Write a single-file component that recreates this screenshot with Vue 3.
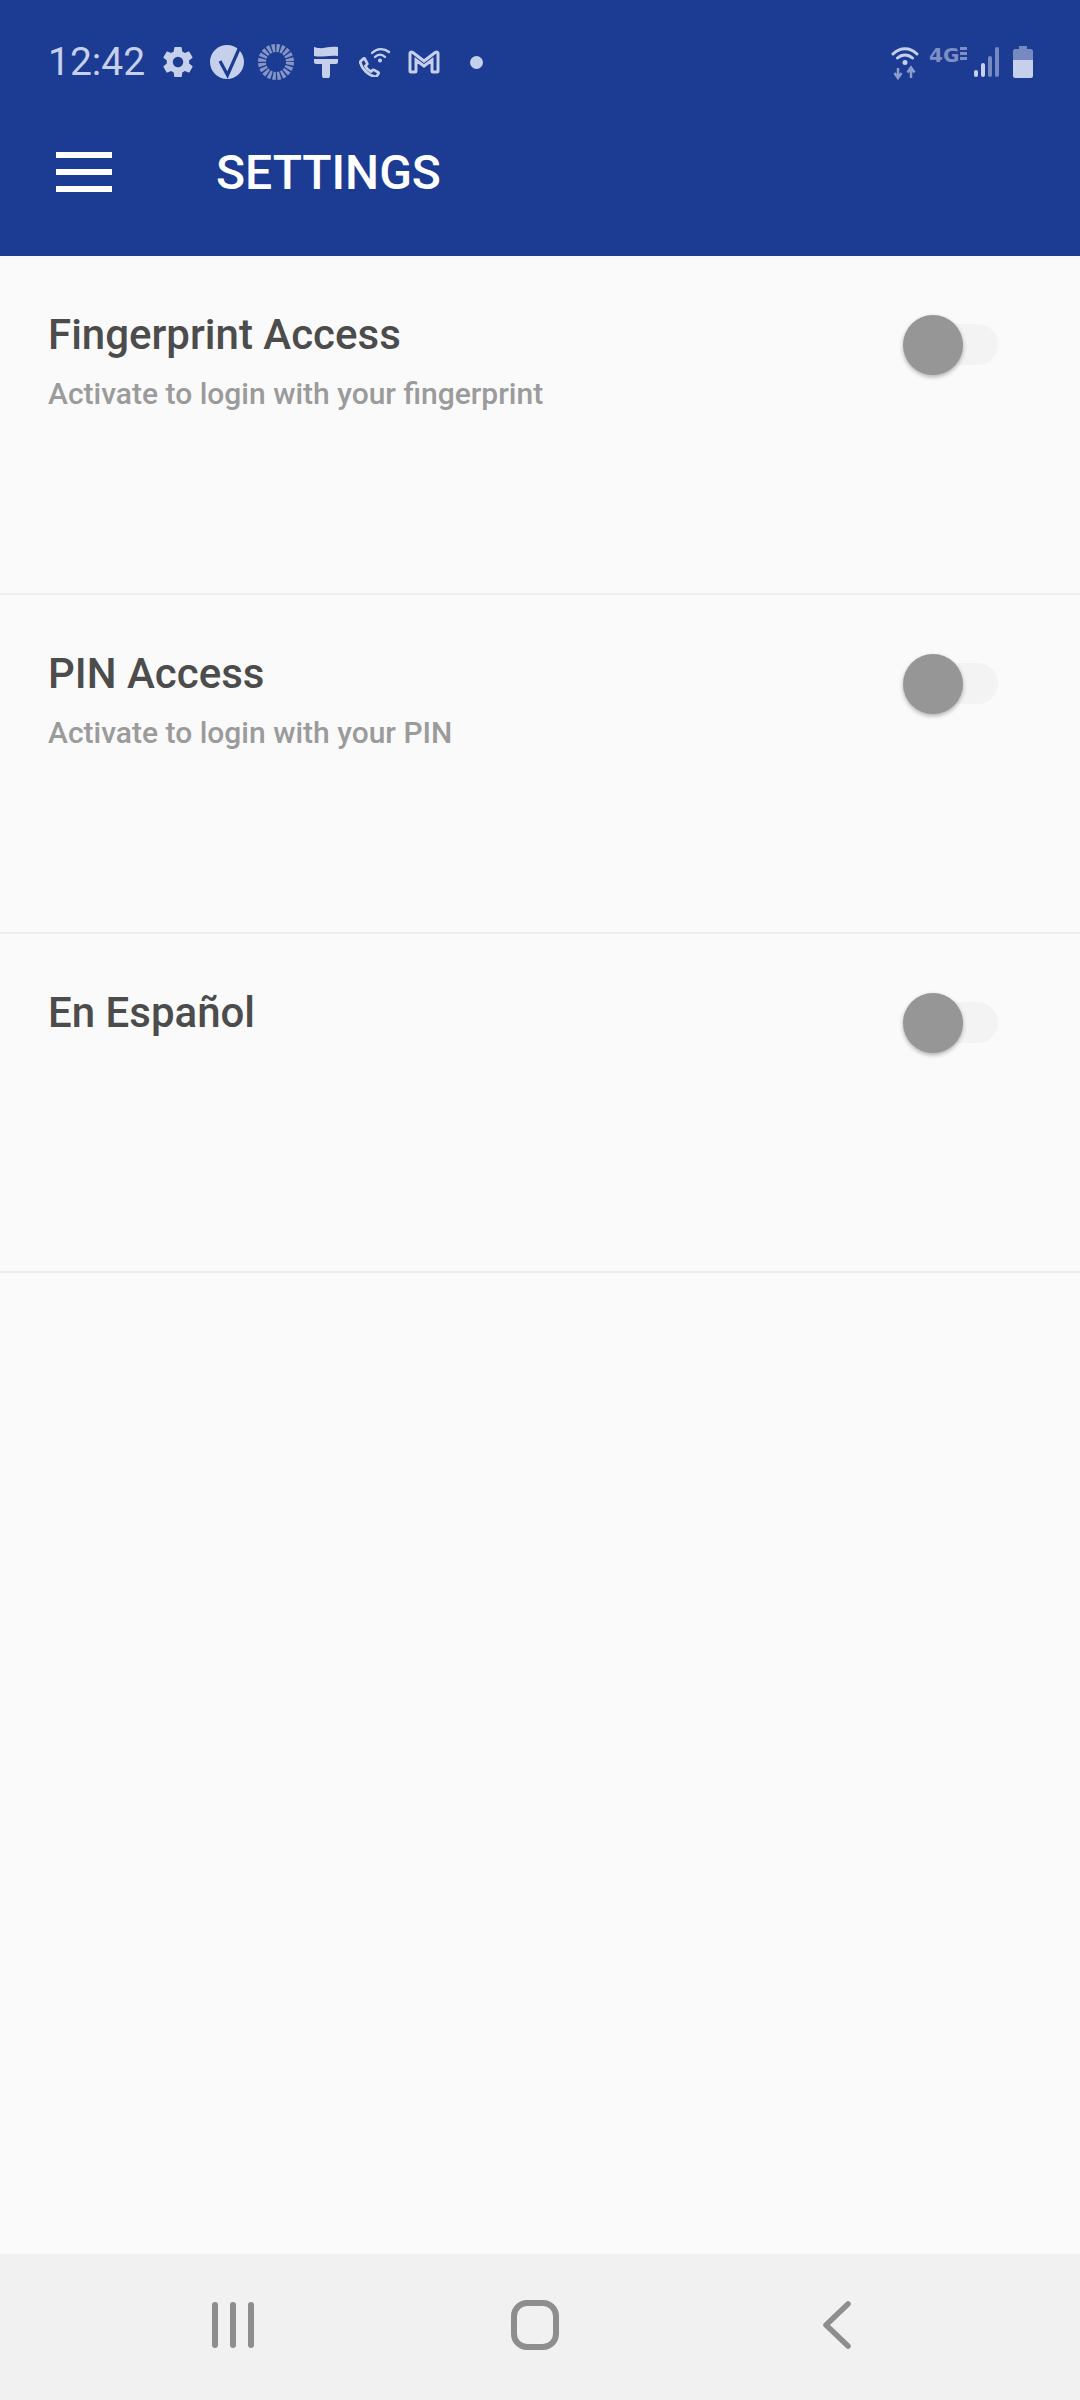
<template>
  <div class="page">
    <header class="appbar">
      <div class="status">
        <span class="time">12:42</span>
        <svg class="ic gear" width="36" height="36" viewBox="0 0 24 24"><path d="M19.4 13c.04-.33.06-.66.06-1s-.02-.67-.07-1l2.1-1.65c.2-.15.25-.42.12-.64l-2-3.46c-.12-.22-.39-.3-.61-.22l-2.49 1c-.52-.4-1.08-.73-1.69-.98l-.38-2.65A.49.49 0 0 0 14 2h-4c-.25 0-.46.18-.49.42l-.38 2.65c-.61.25-1.17.59-1.69.98l-2.49-1c-.23-.09-.49 0-.61.22l-2 3.46c-.13.22-.07.49.12.64L4.57 11c-.05.33-.07.66-.07 1s.02.67.07 1l-2.11 1.65c-.19.15-.24.42-.12.64l2 3.46c.12.22.39.3.61.22l2.49-1c.52.4 1.08.73 1.69.98l.38 2.65c.03.24.24.42.49.42h4c.25 0 .46-.18.49-.42l.38-2.65c.61-.25 1.17-.59 1.69-.98l2.49 1c.23.09.49 0 .61-.22l2-3.46c.12-.22.07-.49-.12-.64L19.4 13zM12 15.500a3.500 3.500 0 1 1 0-7 3.500 3.500 0 0 1 0 7z"/></svg>
        <svg class="ic check" width="34" height="34" viewBox="0 0 34 34"><circle cx="17" cy="17" r="17"/><path class="cut" d="M10 16l7.500 14L29 4" fill="none" stroke-width="3.200" stroke-linejoin="miter"/></svg>
        <svg class="ic ring" width="36" height="36" viewBox="0 0 36 36"><circle cx="18" cy="18" r="14" fill="none" stroke-width="8" stroke-dasharray="3 1.400"/></svg>
        <svg class="ic brush" width="26" height="32" viewBox="0 0 26 32"><path d="M1 1c5 1.500 8 1.500 12 .5 4-.8 8-1 12-.5v9c-4-.5-8-.3-12 .2-4 .5-8 .5-12-.2zM1 13h24v3c0 1-1 2-2 2h-6v11a4 4 0 0 1-8 0V18H3c-1 0-2-1-2-2z"/></svg>
        <svg class="ic phone" width="32" height="30" viewBox="0 0 32 30">
          <path transform="translate(0 5.500) scale(.85)" d="M6.500 7l3 5.500c.4.700.2 1.300-.3 1.800l-1.700 1.700c1.300 3 3.500 5.200 6.500 6.500l1.700-1.700c.5-.5 1.100-.6 1.800-.3l5 2.700c.7.400.8 1 .4 1.600l-1.700 2.500c-.6.800-1.400 1.100-2.400.9C10.500 26.800 3.500 19.500 1.600 12.300c-.3-1 0-1.800.8-2.400l2.500-2.500c.6-.5 1.200-.7 1.600-.4z" fill="none" stroke-width="3.200"/>
          <path d="M13 6C18 1 25 1 30 5M16 10c3-3 7-3 10 0" fill="none" stroke-width="2.400" stroke-linecap="round"/>
          <circle class="solid" cx="21" cy="13.500" r="2"/>
        </svg>
        <svg class="ic mail" width="32" height="24" viewBox="0 0 32 24"><path d="M2 21V3.500C2 2 3.500 1.500 4.500 2.300L16 11 27.500 2.300c1-.8 2.500-.3 2.500 1.200V21c0 .6-.4 1-1 1h-4c-.6 0-1-.4-1-1V10l-8 6-8-6v11c0 .6-.4 1-1 1H3c-.6 0-1-.4-1-1z" fill="none" stroke-width="3"/></svg>
        <span class="dot"></span>
        <span class="status-right">
          <svg class="ic wifi" width="28" height="35" viewBox="0 0 28 35">
            <path d="M2 9C9 2 19 2 26 9M6.500 13C11 9 17 9 21.500 13" fill="none" stroke-width="3" stroke-linecap="round"/>
            <circle class="solid" cx="14" cy="17.500" r="2.500"/>
            <path class="dim" d="M7 23v8M3.500 28L7 33l3.500-5M20 33v-9M16.500 27.500L20 22.500l3.500 5" fill="none" stroke-width="2.500"/>
          </svg>
          <span class="net">4G</span>
          <svg class="ic signal" width="28" height="32" viewBox="0 0 28 32">
            <rect class="solid" x="1" y="24" width="4" height="7" rx="2"/>
            <rect class="solid" x="8" y="17" width="4" height="14" rx="2"/>
            <rect class="mid" x="15" y="10" width="4" height="21" rx="2"/>
            <rect class="mid" x="22" y="1" width="4" height="30" rx="2"/>
          </svg>
          <svg class="ic batt" width="20" height="32" viewBox="0 0 20 32">
            <path class="mid" d="M6 0h8v3h4c1 0 2 1 2 2v10H0V5c0-1 1-2 2-2h4z"/>
            <path class="solid" d="M0 14h20v16c0 1-1 2-2 2H2c-1 0-2-1-2-2z"/>
          </svg>
        </span>
      </div>
      <div class="toolbar">
        <div class="burger"><span></span><span></span><span></span></div>
        <h1>SETTINGS</h1>
      </div>
    </header>

    <main class="list">
      <div v-for="row in rows" :key="row.title" class="row">
        <div class="texts">
          <div class="title">{{ row.title }}</div>
          <div v-if="row.sub" class="sub">{{ row.sub }}</div>
        </div>
        <div class="switch"><span class="thumb"></span></div>
      </div>
    </main>

    <nav class="navbar">
      <svg width="44" height="46" viewBox="0 0 44 46"><path d="M4 3v40M22 3v40M40 3v40" stroke="#8e8e8e" stroke-width="6" stroke-linecap="round" fill="none"/></svg>
      <svg width="48" height="50" viewBox="0 0 48 50"><rect x="3" y="3" width="42" height="44" rx="13" stroke="#8e8e8e" stroke-width="6" fill="none"/></svg>
      <svg width="30" height="48" viewBox="0 0 30 48"><path d="M26 3L4 24l22 21" stroke="#8e8e8e" stroke-width="5.500" stroke-linecap="round" stroke-linejoin="round" fill="none"/></svg>
    </nav>
  </div>
</template>

<script setup>
const rows = [
  { title: 'Fingerprint Access', sub: 'Activate to login with your fingerprint' },
  { title: 'PIN Access', sub: 'Activate to login with your PIN' },
  { title: 'En Español', sub: '' },
]
</script>

<style>
html, body { margin: 0; background: #fafafa; }
</style>

<style scoped>
.page {
  width: 1080px;
  height: 2400px;
  display: flex;
  flex-direction: column;
  background: #fafafa;
  font-family: Roboto, "Liberation Sans", sans-serif;
}

.appbar {
  height: 256px;
  flex: none;
  background: #1c3b93;
  box-sizing: border-box;
}

.status {
  height: 104px;
  padding: 20px 47px 0 48px;
  box-sizing: border-box;
  display: flex;
  align-items: center;
  color: #c6d0ea;
}

.time {
  font-size: 39px;
  width: 112px;
  flex: none;
  color: #c6d0ea;
}

.ic { flex: none; fill: #c6d0ea; stroke: #c6d0ea; stroke-width: 0; }
.ic .solid { fill: #c6d0ea; stroke: none; }
.ic .mid { fill: #7689c0; stroke: none; }
.ic .dim { stroke: #8c9ccb; }
.check .cut { stroke: #1c3b93; }
.ring { fill: none; stroke: #8495c6; margin-left: 14px; }
.check { margin-left: 14px; }
.brush { margin-left: 19px; }
.phone { margin-left: 20px; }
.mail { margin-left: 17px; }

.dot {
  width: 13px;
  height: 13px;
  margin-left: 30px;
  border-radius: 50%;
  background: #c6d0ea;
  flex: none;
}

.status-right {
  margin-left: auto;
  display: flex;
  align-items: center;
}

.net {
  width: 44px;
  margin: -14px 0 0 10px;
  font-family: "DejaVu Sans", sans-serif;
  font-size: 20px;
  font-weight: 700;
  line-height: 20px;
  color: #7d8fc3;
  display: flex;
  flex: none;
}

.net::after {
  content: "";
  width: 7px;
  height: 15px;
  margin: 2px 0 0 1px;
  flex: none;
  background: repeating-linear-gradient(#7d8fc3 0 3px, transparent 3px 5px);
}

.batt { margin-left: 12px; }

.toolbar {
  height: 136px;
  padding: 0 0 0 56px;
  display: flex;
  align-items: center;
}

.burger {
  width: 56px;
  height: 40px;
  display: flex;
  flex-direction: column;
  justify-content: space-between;
}

.burger span {
  display: block;
  height: 6px;
  background: #fff;
}

h1 {
  margin: 2px 0 0 104px;
  color: #fff;
  font-size: 48px;
  font-weight: 500;
  line-height: 1;
}

.list { flex: 1; }

.row {
  height: 339px;
  box-sizing: border-box;
  padding: 54px 82px 0 48px;
  display: flex;
  justify-content: space-between;
  border-bottom: 2px solid #eeeeee;
}

.title {
  color: #4c4c4c;
  font-size: 42px;
  font-weight: 500;
  line-height: 50px;
}

.sub {
  margin-top: 16px;
  color: #9b9b9b;
  font-size: 30px;
  font-weight: 500;
  line-height: 36px;
}

.switch {
  position: relative;
  width: 72px;
  height: 41px;
  margin-top: 14px;
  border-radius: 21px;
  background: #f3f3f3;
}

.thumb {
  position: absolute;
  left: -23px;
  top: -9px;
  width: 60px;
  height: 60px;
  border-radius: 50%;
  background: #969696;
  box-shadow: 0 2px 4px rgba(0, 0, 0, 0.3);
}

.navbar {
  height: 146px;
  flex: none;
  background: #f1f1f1;
  padding: 0 0 4px 82px;
  box-sizing: border-box;
  display: grid;
  grid-template-columns: repeat(3, 302px);
  align-items: center;
  justify-items: center;
}
</style>
